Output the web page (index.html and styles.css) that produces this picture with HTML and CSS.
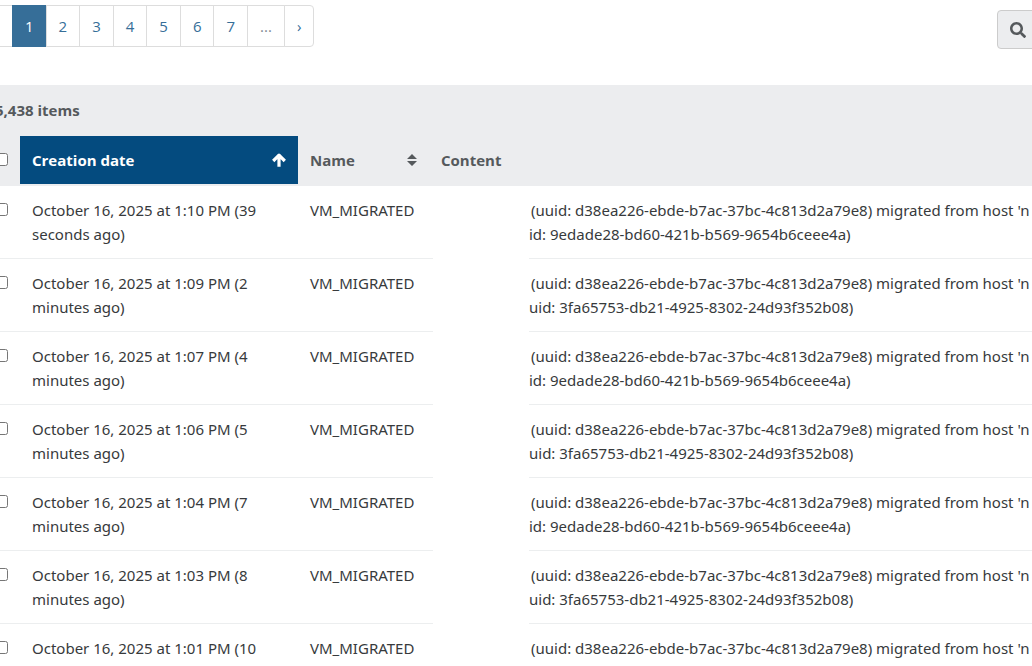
FILE: index.html
```html
<!DOCTYPE html>
<html lang="en">
<head>
    <meta charset="UTF-8">
    <meta name="viewport" content="width=device-width, initial-scale=1.0">
    <title>Messages</title>
    <link rel="stylesheet" href="styles.css">
</head>
<body>
    <main class="page">
        <div class="toolbar">
            <nav aria-label="Pages">
                <ul class="pagination">
                    <li><a href="#" class="prev" aria-label="Previous"></a></li>
                    <li><a href="#" class="active" aria-current="page">1</a></li>
                    <li><a href="#">2</a></li>
                    <li><a href="#">3</a></li>
                    <li><a href="#">4</a></li>
                    <li><a href="#">5</a></li>
                    <li><a href="#">6</a></li>
                    <li><a href="#">7</a></li>
                    <li><span>...</span></li>
                    <li><a href="#">›</a></li>
                </ul>
            </nav>
            <button type="button" class="search-btn" aria-label="Search">
                <svg width="16" height="16" viewBox="0 0 512 512"><path fill="currentColor" d="M505 442.700L405.300 343c-4.500-4.500-10.600-7-17-7H372c27.600-35.300 44-79.700 44-128C416 93.100 322.900 0 208 0S0 93.100 0 208s93.100 208 208 208c48.300 0 92.700-16.400 128-44v16.300c0 6.400 2.500 12.500 7 17l99.700 99.700c9.400 9.400 24.600 9.400 33.900 0l28.300-28.300c9.400-9.400 9.400-24.600.1-34zM208 336c-70.700 0-128-57.200-128-128 0-70.700 57.200-128 128-128 70.700 0 128 57.200 128 128 0 70.700-57.200 128-128 128z"/></svg>
            </button>
        </div>

        <div class="items-count">5,438 items</div>

        <table class="messages">
            <colgroup>
                <col class="col-check">
                <col class="col-date">
                <col class="col-name">
                <col class="col-object">
                <col>
            </colgroup>
            <thead>
                <tr>
                    <th><input type="checkbox" aria-label="Select all"></th>
                    <th class="sorted" aria-sort="ascending">
                        <div class="th-label">Creation date
                            <svg width="14" height="14" viewBox="0 0 14 14"><path fill="none" stroke="currentColor" stroke-width="3.200" stroke-linejoin="round" d="M1.200 8L7 2.200 12.800 8M7 3v10.800"/></svg>
                        </div>
                    </th>
                    <th>
                        <div class="th-label">Name
                            <svg width="10" height="12" viewBox="0 0 10 12"><path fill="currentColor" d="M5 0L10 5H0zM0 7h10L5 12z"/></svg>
                        </div>
                    </th>
                    <th class="content-head" colspan="2">Content</th>
                </tr>
            </thead>
            <tbody>
                <tr>
                    <td><input type="checkbox" aria-label="Select message"></td>
                    <td>October 16, 2025 at 1:10 PM (39 seconds ago)</td>
                    <td>VM_MIGRATED</td>
                    <td class="object"></td>
                    <td class="content">(uuid: d38ea226-ebde-b7ac-37bc-4c813d2a79e8) migrated from host 'n<br>id: 9edade28-bd60-421b-b569-9654b6ceee4a)</td>
                </tr>
                <tr>
                    <td><input type="checkbox" aria-label="Select message"></td>
                    <td>October 16, 2025 at 1:09 PM (2 minutes ago)</td>
                    <td>VM_MIGRATED</td>
                    <td class="object"></td>
                    <td class="content">(uuid: d38ea226-ebde-b7ac-37bc-4c813d2a79e8) migrated from host 'n<br>uid: 3fa65753-db21-4925-8302-24d93f352b08)</td>
                </tr>
                <tr>
                    <td><input type="checkbox" aria-label="Select message"></td>
                    <td>October 16, 2025 at 1:07 PM (4 minutes ago)</td>
                    <td>VM_MIGRATED</td>
                    <td class="object"></td>
                    <td class="content">(uuid: d38ea226-ebde-b7ac-37bc-4c813d2a79e8) migrated from host 'n<br>id: 9edade28-bd60-421b-b569-9654b6ceee4a)</td>
                </tr>
                <tr>
                    <td><input type="checkbox" aria-label="Select message"></td>
                    <td>October 16, 2025 at 1:06 PM (5 minutes ago)</td>
                    <td>VM_MIGRATED</td>
                    <td class="object"></td>
                    <td class="content">(uuid: d38ea226-ebde-b7ac-37bc-4c813d2a79e8) migrated from host 'n<br>uid: 3fa65753-db21-4925-8302-24d93f352b08)</td>
                </tr>
                <tr>
                    <td><input type="checkbox" aria-label="Select message"></td>
                    <td>October 16, 2025 at 1:04 PM (7 minutes ago)</td>
                    <td>VM_MIGRATED</td>
                    <td class="object"></td>
                    <td class="content">(uuid: d38ea226-ebde-b7ac-37bc-4c813d2a79e8) migrated from host 'n<br>id: 9edade28-bd60-421b-b569-9654b6ceee4a)</td>
                </tr>
                <tr>
                    <td><input type="checkbox" aria-label="Select message"></td>
                    <td>October 16, 2025 at 1:03 PM (8 minutes ago)</td>
                    <td>VM_MIGRATED</td>
                    <td class="object"></td>
                    <td class="content">(uuid: d38ea226-ebde-b7ac-37bc-4c813d2a79e8) migrated from host 'n<br>uid: 3fa65753-db21-4925-8302-24d93f352b08)</td>
                </tr>
                <tr>
                    <td><input type="checkbox" aria-label="Select message"></td>
                    <td>October 16, 2025 at 1:01 PM (10 minutes ago)</td>
                    <td>VM_MIGRATED</td>
                    <td class="object"></td>
                    <td class="content">(uuid: d38ea226-ebde-b7ac-37bc-4c813d2a79e8) migrated from host 'n<br>id: 9edade28-bd60-421b-b569-9654b6ceee4a)</td>
                </tr>
            </tbody>
        </table>
    </main>
</body>
</html>
```

FILE: styles.css
```css
* {
    box-sizing: border-box;
}
body {
    margin: 0;
    overflow-x: hidden;
    background-color: #fff;
    color: #373a3c;
    font-family: "Segoe UI", "Open Sans", sans-serif;
    font-size: 15px;
    line-height: 24px;
}
.page {
    margin: 0 -12px 0 -17px;
}
.toolbar {
    display: flex;
    justify-content: space-between;
    align-items: flex-start;
    padding: 5px 0 36px;
}
.pagination {
    display: flex;
    list-style: none;
    margin: 0;
    padding: 0;
}
.pagination a,
.pagination span {
    display: block;
    height: 42px;
    padding: 8px 12px;
    margin-left: -1px;
    border: 1px solid #ddd;
    background: #fff;
    color: #366e98;
    text-decoration: none;
}
.pagination span {
    color: #818a91;
}
.pagination .prev {
    width: 31px;
}
.pagination .active {
    border-color: #366e98;
    background: #366e98;
    color: #fff;
}
.pagination li:last-child a {
    border-radius: 0 4px 4px 0;
}
.search-btn {
    display: flex;
    align-items: center;
    height: 39px;
    margin-top: 5px;
    padding: 0 17px 0 12px;
    border: 1px solid #ccc;
    border-radius: 4px;
    background: #ecedef;
    color: #55595c;
    cursor: pointer;
}
.items-count {
    padding: 13px 12px 14px;
    background: #ecedef;
    color: #55595c;
    font-weight: bold;
}
.messages {
    width: 100%;
    table-layout: fixed;
    border-collapse: separate;
    border-spacing: 0;
}
.col-check {
    width: 37px;
}
.col-date {
    width: 278px;
}
.col-name {
    width: 135px;
}
.col-object {
    width: 96px;
}
.messages th,
.messages td {
    padding: 12px;
    text-align: left;
    vertical-align: top;
}
.messages th {
    border-bottom: 2px solid #ecedef;
    background: #ecedef;
    color: #55595c;
}
.messages td {
    border-bottom: 1px solid #eceeef;
    font-family: "Segoe UI", "Noto Sans", sans-serif;
}
.messages th.sorted {
    background: #044b7f;
    color: #fff;
}
.messages th.content-head {
    padding-left: 8px;
}
.th-label {
    display: flex;
    justify-content: space-between;
    align-items: center;
}
th:not(.sorted) .th-label {
    padding-right: 4px;
}
.messages input {
    display: block;
    width: 13px;
    height: 13px;
    margin: 5px 0 0;
}
.messages td.object {
    border-bottom: none;
}
.messages td.content {
    padding: 12px 0;
    overflow: hidden;
    text-indent: 2px;
    white-space: nowrap;
}
```
